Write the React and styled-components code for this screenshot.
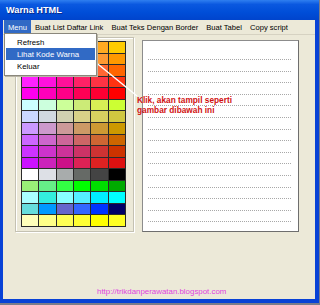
import styled, { createGlobalStyle } from "styled-components";

const GlobalStyle = createGlobalStyle`
  html, body {
    margin: 0;
    padding: 0;
    background: #7a7d8c;
  }
  #root {
    width: 320px;
    height: 305px;
    overflow: hidden;
  }
`;

const COLORS = [
  ["#ffccff", "#ffcccc", "#ffcc99", "#ffcc66", "#ffaa22", "#ffcc00"],
  ["#ff99ff", "#ff99cc", "#ff9999", "#ff9966", "#ff9933", "#ff9900"],
  ["#ff66ff", "#ff66cc", "#ff6699", "#ff6666", "#ff6633", "#ff6600"],
  ["#ff22ff", "#ff11dd", "#ff1199", "#ff2266", "#ff3344", "#ff3311"],
  ["#ff00ee", "#ff00bb", "#ff0088", "#ff0055", "#ff0033", "#ff0000"],
  ["#ccffff", "#ccffdd", "#ccff99", "#cceb77", "#d8ee55", "#ccff33"],
  ["#ccd8ff", "#d0d8e0", "#d0d0b0", "#d8d088", "#d8d060", "#d0c840"],
  ["#cc99ff", "#cc99cc", "#cc9999", "#cc9966", "#cc9933", "#cc9900"],
  ["#cc66ff", "#cc66cc", "#cc6699", "#cc6666", "#cc6633", "#cc6600"],
  ["#cc33ff", "#cc33cc", "#cc3399", "#cc3366", "#cc3333", "#cc3300"],
  ["#cc11ff", "#cc22bb", "#cc1188", "#dd2255", "#dd2222", "#dd1111"],
  ["#ffffff", "#dde0e6", "#a8acac", "#666a66", "#444444", "#000000"],
  ["#99ee77", "#66ee88", "#33ff44", "#00ff00", "#00dd00", "#00aa00"],
  ["#aaffff", "#33eedd", "#88ffff", "#55eeff", "#00eeff", "#00ffff"],
  ["#66dddd", "#0099ff", "#6666cc", "#3366ff", "#0033ff", "#000066"],
  ["#ffffbb", "#ffff88", "#ffff55", "#ffff33", "#ffff00", "#ffff22"],
];

const MENU = ["Menu", "Buat List Daftar Link", "Buat Teks Dengan Border", "Buat Tabel", "Copy script"];
const DROPDOWN = ["Refresh", "Lihat Kode Warna", "Keluar"];

const Window = styled.div`
  position: relative;
  width: 319px;
  height: 303px;
  display: flex;
  flex-direction: column;
  font-family: "Liberation Sans", Arial, sans-serif;
`;

const TitleBar = styled.div`
  height: 20px;
  display: flex;
  align-items: center;
  padding-left: 6px;
  background: linear-gradient(#2f7ff0 0%, #0a58e0 22%, #004ed8 60%, #0044cc 100%);
`;

const Title = styled.span`
  color: #fff;
  font-weight: bold;
  font-size: 9.2px;
  text-shadow: 1px 1px 0 #0a2a8c;
`;

const Frame = styled.div`
  flex: 1;
  display: flex;
  flex-direction: column;
  background: #ece9d8;
  border-left: 3px solid #0842d6;
  border-right: 4px solid #0842d6;
  border-bottom: 4px solid #0842d6;
`;

const MenuBar = styled.div`
  height: 14px;
  display: flex;
  align-items: stretch;
  padding-left: 1px;
  border-bottom: 1px solid #d6d2c2;
`;

const MenuItem = styled.div`
  display: flex;
  align-items: center;
  padding: 0 4px;
  font-size: 7.6px;
  color: ${({ $active }) => ($active ? "#fff" : "#000")};
  background: ${({ $active }) => ($active ? "#316ac5" : "transparent")};
`;

const Body = styled.div`
  flex: 1;
  display: flex;
  flex-direction: column;
  padding: 2px 15px 0 12px;
`;

const Panels = styled.div`
  display: flex;
  gap: 8px;
`;

const ColorPanel = styled.div`
  width: 119px;
  height: 195px;
  box-sizing: border-box;
  padding: 3px 7px 5px 5px;
  border: 1px solid #c4c1b2;
  box-shadow: inset 1px 1px 0 #fff, 1px 1px 0 #fff;
`;

const ColorGrid = styled.div`
  width: 105px;
  height: 186px;
  box-sizing: border-box;
  display: grid;
  grid-template-columns: repeat(6, 1fr);
  grid-template-rows: repeat(16, 1fr);
  gap: 1px;
  padding: 1px;
  background: #2a2a2a;
`;

const Cell = styled.div`
  background: ${({ $color }) => $color};
`;

const PreviewBox = styled.div`
  margin-top: 3px;
  width: 157px;
  height: 192px;
  box-sizing: border-box;
  background: #fff;
  border: 1px solid #8c8c8c;
  border-right-color: #6e6e6e;
  border-bottom-color: #6e6e6e;
  padding: 18px 7px 0 5px;
  display: flex;
  flex-direction: column;
  gap: 10.6px;
`;

const DottedLine = styled.div`
  border-top: 1px dotted #a8a8a8;
`;

const Footer = styled.div`
  margin-top: auto;
  margin-bottom: 2px;
  padding-left: 82px;
  font-size: 7.9px;
  line-height: 10px;
  color: #e040e0;
`;

const Dropdown = styled.div`
  position: absolute;
  left: 4px;
  top: 33px;
  width: 93px;
  box-sizing: border-box;
  padding: 2px 1px 3px;
  background: #fff;
  border: 1px solid #8a877c;
  box-shadow: 1px 1px 0 #b8b5a6;
`;

const DropItem = styled.div`
  height: 12px;
  display: flex;
  align-items: center;
  padding-left: 11px;
  font-size: 7.8px;
  color: ${({ $active }) => ($active ? "#fff" : "#000")};
  background: ${({ $active }) => ($active ? "#316ac5" : "transparent")};
`;

const Pointer = styled.svg`
  position: absolute;
  left: 0;
  top: 0;
  pointer-events: none;
`;

const Note = styled.div`
  position: absolute;
  left: 137px;
  top: 95px;
  font-size: 8.3px;
  line-height: 10px;
  font-weight: bold;
  color: #d01010;
`;

const App = () => {
  return (
    <>
      <GlobalStyle />
      <Window>
        <TitleBar>
          <Title>Warna HTML</Title>
        </TitleBar>
        <Frame>
          <MenuBar>
            {MENU.map((m, i) => (
              <MenuItem key={m} $active={i === 0}>
                {m}
              </MenuItem>
            ))}
          </MenuBar>
          <Body>
            <Panels>
              <ColorPanel>
                <ColorGrid>
                  {COLORS.flat().map((c, i) => (
                    <Cell key={i} $color={c} />
                  ))}
                </ColorGrid>
              </ColorPanel>
              <PreviewBox>
                {Array.from({ length: 15 }).map((_, i) => (
                  <DottedLine key={i} />
                ))}
              </PreviewBox>
            </Panels>
            <Footer>http://trikdanperawatan.blogspot.com</Footer>
          </Body>
        </Frame>
        <Pointer width="320" height="305">
          <line x1="88" y1="56" x2="137" y2="96" stroke="#fff" strokeWidth="1.4" />
        </Pointer>
        <Dropdown>
          {DROPDOWN.map((d, i) => (
            <DropItem key={d} $active={i === 1}>
              {d}
            </DropItem>
          ))}
        </Dropdown>
        <Note>
          Klik, akan tampil seperti
          <br />
          gambar dibawah ini
        </Note>
      </Window>
    </>
  );
};

export default App;
